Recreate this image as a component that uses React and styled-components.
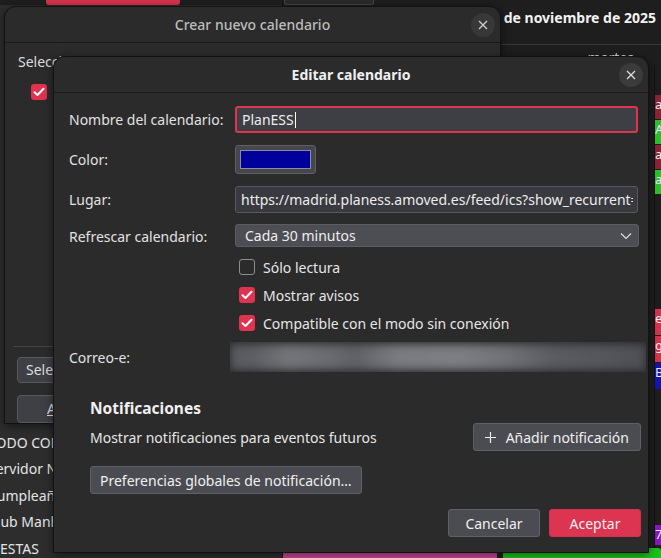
import React from 'react'
import styled, { createGlobalStyle } from 'styled-components'

const Global = createGlobalStyle`
  html, body { margin: 0; padding: 0; background: #1c1c1c; }
  * { box-sizing: border-box; }
  body { font-family: "Noto Sans", "Open Sans", sans-serif; font-size: 14px; color: #e6e6e6; }
`

const Desktop = styled.div`
  position: relative;
  width: 661px;
  height: 558px;
  overflow: hidden;
  background: #1e1e1e;
  display: flex;
`

/* background calendar app */
const Sidebar = styled.div`
  width: 283px;
  background: #2d2d2d;
  display: flex;
  flex-direction: column;
  border-right: 1px solid #161616;
`
const TabStrip = styled.div`
  height: 5px;
  display: flex;
  padding-left: ${p => p.$pl}px;
  background: #1e1e1e;
`
const Tab = styled.div`
  width: ${p => p.$w}px;
  background: ${p => p.$color};
  border: ${p => (p.$outline ? '1px solid #444' : 'none')};
  border-top: none;
  border-radius: 0 0 3px 3px;
`
const CalList = styled.div`
  margin-top: auto;
  display: flex;
  flex-direction: column;
  margin-bottom: -4px;
`
const CalItem = styled.div`
  height: 26.5px;
  line-height: 26px;
  margin-left: -12px;
  white-space: nowrap;
  color: #e4e4e4;
  font-size: 14px;
`

const Main = styled.div`
  flex: 1;
  display: flex;
  flex-direction: column;
  background: #1e1e1e;
`
const MainHeader = styled.div`
  height: 40px;
  border-bottom: 1px solid #3a3a3a;
  display: flex;
  justify-content: flex-end;
  align-items: flex-start;
  padding: 3px 5px 0 0;
  font-weight: 700;
  font-size: 14px;
  color: #f2f2f2;
`
const DayRow = styled.div`
  height: 20px;
  display: flex;
  justify-content: flex-end;
  padding: 4px 27px 0 0;
  color: #dcdcdc;
  font-size: 14px;
  line-height: 18px;
`
const Grid = styled.div`
  flex: 1;
  display: flex;
  justify-content: flex-end;
`
const EventCol = styled.div`
  width: 7px;
  display: flex;
  flex-direction: column;
  border-left: 1px solid #111;
`
const EventBlock = styled.div`
  height: ${p => p.$h}px;
  background: ${p => p.$color};
  margin-top: ${p => p.$mt || 0}px;
  color: #eee;
  font-size: 13px;
  overflow: hidden;
  white-space: nowrap;
  border-bottom: 1px solid #1e1e1e;
`
const BottomRow = styled.div`
  height: 10px;
  display: flex;
  gap: 6px;
`
const BottomEvent = styled.div`
  flex: ${p => p.$flex};
  background: ${p => p.$color};
  border-radius: 3px 3px 0 0;
`

/* windows */
const Window = styled.div`
  position: absolute;
  left: ${p => p.$x}px;
  top: ${p => p.$y}px;
  width: ${p => p.$w}px;
  height: ${p => p.$h}px;
  background: #2b2b2b;
  border: 1px solid #121212;
  border-radius: 12px 12px 0 0;
  display: flex;
  flex-direction: column;
  overflow: hidden;
  box-shadow: 0 2px 10px rgba(0, 0, 0, 0.5);
`
const TitleBar = styled.div`
  height: 36px;
  flex: none;
  border-bottom: 1px solid #1a1a1a;
  display: flex;
  align-items: center;
  justify-content: center;
  position: relative;
  font-weight: ${p => (p.$active ? 700 : 500)};
  color: ${p => (p.$active ? '#f0f0f0' : '#bdbdbd')};
  font-size: 14px;
`
const CloseButton = styled.div`
  position: absolute;
  right: 5px;
  top: 6px;
  width: 24px;
  height: 24px;
  border-radius: 50%;
  background: ${p => (p.$active ? '#3b3b3b' : '#383838')};
  display: flex;
  align-items: center;
  justify-content: center;
`

const BackBody = styled.div`
  flex: 1;
  display: flex;
  flex-direction: column;
  padding: 9px 0 0 13px;
`
const BackText = styled.div`
  color: #ddd;
  white-space: nowrap;
`
const BackCheck = styled.div`
  margin: 13px 0 0 13px;
`
const BackSeparator = styled.div`
  margin-top: auto;
  margin-left: -5px;
  height: 1px;
  background: #444;
`
const BackButton = styled.div`
  margin: ${p => p.$mt}px 0 0 -1px;
  height: ${p => p.$h}px;
  width: 60px;
  border: 1px solid #5a5a5e;
  background: #3f4045;
  border-radius: 4px;
  line-height: ${p => p.$h - 2}px;
  color: #ddd;
  white-space: nowrap;
  text-decoration: ${p => (p.$u ? 'underline' : 'none')};
  padding-left: ${p => (p.$u ? 29 : 8)}px;
`

const Body = styled.div`
  flex: 1;
  display: flex;
  flex-direction: column;
  padding: 13px 7px 15px 15px;
`
const Form = styled.div`
  display: grid;
  grid-template-columns: 166px minmax(0, 1fr);
  align-items: center;
  row-gap: 12px;
  margin-right: 3px;
`
const Label = styled.div`
  color: #e2e2e2;
  white-space: nowrap;
`
const TextInput = styled.div`
  height: 27px;
  min-width: 0;
  overflow: hidden;
  background: ${p => (p.$focus ? '#3e3f44' : '#393a3f')};
  border: ${p => (p.$focus ? '2px solid #e0334f' : '1px solid #58595e')};
  border-radius: 3px;
  display: flex;
  align-items: center;
  padding: 0 4px 0 5px;
  color: #ededed;
`
const InputText = styled.span`
  min-width: 0;
  overflow: hidden;
  white-space: nowrap;
`
const Caret = styled.span`
  display: inline-block;
  flex: none;
  width: 1px;
  height: 16px;
  background: #fff;
  margin-left: 1px;
`
const ColorButton = styled.div`
  width: 81px;
  height: 29px;
  background: #46474c;
  border: 1px solid #5e5f64;
  border-radius: 3px;
  padding: 4px;
`
const Swatch = styled.div`
  height: 100%;
  background: #00009c;
  border: 1px solid #8a8aa0;
`
const Select = styled.div`
  height: 23px;
  margin-top: -1px;
  background: #4d4e54;
  border: 1px solid #5c5d62;
  border-radius: 3px;
  display: flex;
  align-items: center;
  justify-content: space-between;
  padding: 0 6px 0 9px;
  margin-right: -1px;
  color: #ededed;
`
const CheckList = styled.div`
  grid-column: 2;
  display: flex;
  flex-direction: column;
  gap: 12px;
  padding-left: 4px;
`
const CheckRow = styled.div`
  display: flex;
  align-items: center;
  gap: 8px;
  height: 16px;
  color: #e6e6e6;
`
const Box = styled.div`
  width: 16px;
  height: 16px;
  border-radius: 3px;
  flex: none;
  background: ${p => (p.$on ? '#df3350' : 'transparent')};
  border: ${p => (p.$on ? 'none' : '1px solid #8d8d8d')};
  display: flex;
  align-items: center;
  justify-content: center;
`
const Blurred = styled.div`
  height: 30px;
  margin: -1px -8px 0 -5px;
  position: relative;
  overflow: hidden;
`
const BlurFill = styled.div`
  position: absolute;
  inset: 2px 0;
  filter: blur(4px);
  background: linear-gradient(90deg, #58595e 0%, #5e5f64 6%, #747579 14%, #6a6b70 24%, #5f6065 30%, #7a7b80 40%, #7d7e83 55%, #717277 66%, #5a5b61 78%, #55565c 90%, #4e4f55 100%);
`

const Section = styled.div`
  margin-top: 26px;
  padding-left: 21px;
  display: flex;
  flex-direction: column;
`
const SectionTitle = styled.div`
  font-weight: 700;
  font-size: 15.5px;
  line-height: 21px;
  color: #f0f0f0;
`
const NotifRow = styled.div`
  display: flex;
  align-items: center;
  justify-content: space-between;
  margin-top: 4px;
`
const Button = styled.div`
  height: 28px;
  padding: 0 ${p => p.$px || 9}px;
  min-width: ${p => p.$min || 0}px;
  display: flex;
  align-items: center;
  justify-content: center;
  gap: 10px;
  border-radius: 3px;
  background: ${p => (p.$primary ? '#dc3451' : '#4b4c52')};
  border: 1px solid ${p => (p.$primary ? '#d8304c' : '#606166')};
  color: #f0f0f0;
  white-space: nowrap;
`
const PrefsRow = styled.div`
  margin-top: 15px;
  display: flex;
`
const Footer = styled.div`
  margin-top: auto;
  display: flex;
  justify-content: flex-end;
  gap: 9px;
`

const XIcon = ({ color = '#ddd' }) => (
  <svg width="10" height="10" viewBox="0 0 10 10">
    <path d="M1 1L9 9M9 1L1 9" stroke={color} strokeWidth="1.3" />
  </svg>
)

const Check = () => (
  <svg width="12" height="10" viewBox="0 0 12 10">
    <path d="M1.5 5.2L4.5 8L10.5 1.8" stroke="#fff" strokeWidth="2" fill="none" strokeLinecap="round" strokeLinejoin="round" />
  </svg>
)

const Chevron = () => (
  <svg width="12" height="8" viewBox="0 0 12 8">
    <path d="M1 1.5L6 6.5L11 1.5" stroke="#ddd" strokeWidth="1.2" fill="none" />
  </svg>
)

const Plus = () => (
  <svg width="11" height="11" viewBox="0 0 11 11">
    <path d="M5.5 0V11M0 5.5H11" stroke="#eee" strokeWidth="1.2" />
  </svg>
)

export default function App() {
  return (
    <>
      <Global />
      <Desktop>
        <Sidebar>
          <TabStrip $pl={46}>
            <Tab $w={134} $color="#d7334f" />
          </TabStrip>
          <CalList>
            <CalItem>TODO CON</CalItem>
            <CalItem>Servidor N</CalItem>
            <CalItem>Cumpleañ</CalItem>
            <CalItem>Club Manh</CalItem>
            <CalItem>FIESTAS</CalItem>
          </CalList>
        </Sidebar>
        <Main>
          <TabStrip $pl={1}>
            <Tab $w={90} $color="#2a2a2a" $outline />
          </TabStrip>
          <MainHeader>de noviembre de 2025</MainHeader>
          <DayRow>martes</DayRow>
          <Grid>
            <EventCol>
              <EventBlock $h={25} $mt={30} $color="#8e2338">a</EventBlock>
              <EventBlock $h={25} $color="#27c52a">A</EventBlock>
              <EventBlock $h={25} $color="#8e2338">a</EventBlock>
              <EventBlock $h={25} $color="#27c52a">a</EventBlock>
              <EventBlock $h={27} $mt={114} $color="#d7334f">e</EventBlock>
              <EventBlock $h={27} $color="#d7334f">g</EventBlock>
              <EventBlock $h={27} $color="#1414b4">B</EventBlock>
              <EventBlock $h={21} $mt={135} $color="#8a16c8">7</EventBlock>
            </EventCol>
          </Grid>
          <BottomRow>
            <BottomEvent $flex={214} $color="#c54593" />
            <BottomEvent $flex={158} $color="#19c21c" />
          </BottomRow>
        </Main>

        <Window $x={4} $y={6} $w={497} $h={418}>
          <TitleBar>
            Crear nuevo calendario
            <CloseButton><XIcon color="#cfcfcf" /></CloseButton>
          </TitleBar>
          <BackBody>
            <BackText>Seleccione el tipo de calendario que desea utilizar</BackText>
            <BackCheck><Box $on><Check /></Box></BackCheck>
            <BackSeparator />
            <BackButton $mt={10} $h={26}>Seleccionar</BackButton>
            <BackButton $mt={12} $h={28} $u>Atrás</BackButton>
          </BackBody>
        </Window>

        <Window $x={53} $y={56} $w={596} $h={497}>
          <TitleBar $active>
            Editar calendario
            <CloseButton $active><XIcon /></CloseButton>
          </TitleBar>
          <Body>
            <Form>
              <Label>Nombre del calendario:</Label>
              <TextInput $focus><InputText>PlanESS</InputText><Caret /></TextInput>
              <Label>Color:</Label>
              <div><ColorButton><Swatch /></ColorButton></div>
              <Label>Lugar:</Label>
              <TextInput><InputText>https://madrid.planess.amoved.es/feed/ics?show_recurrent=1</InputText></TextInput>
              <Label>Refrescar calendario:</Label>
              <Select>Cada 30 minutos<Chevron /></Select>
              <CheckList>
                <CheckRow><Box />Sólo lectura</CheckRow>
                <CheckRow><Box $on><Check /></Box>Mostrar avisos</CheckRow>
                <CheckRow><Box $on><Check /></Box>Compatible con el modo sin conexión</CheckRow>
              </CheckList>
              <Label>Correo-e:</Label>
              <Blurred><BlurFill /></Blurred>
            </Form>
            <Section>
              <SectionTitle>Notificaciones</SectionTitle>
              <NotifRow>
                <span>Mostrar notificaciones para eventos futuros</span>
                <Button $px={11}><Plus />Añadir notificación</Button>
              </NotifRow>
              <PrefsRow>
                <Button>Preferencias globales de notificación…</Button>
              </PrefsRow>
            </Section>
            <Footer>
              <Button $min={92}>Cancelar</Button>
              <Button $min={92} $primary>Aceptar</Button>
            </Footer>
          </Body>
        </Window>
      </Desktop>
    </>
  )
}
